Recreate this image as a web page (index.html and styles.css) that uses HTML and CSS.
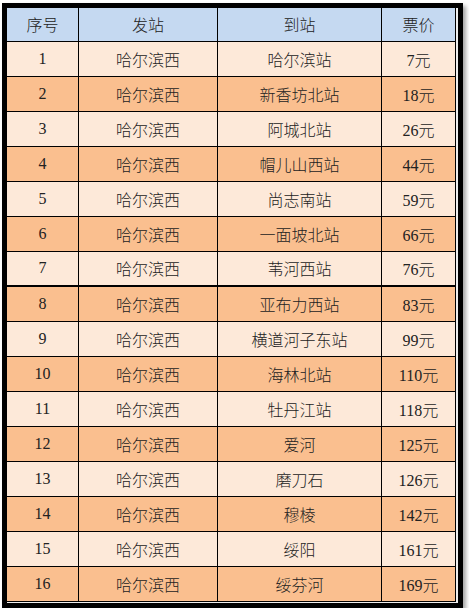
FILE: index.html
```html
<!DOCTYPE html>
<html lang="zh-CN">
<head>
<meta charset="utf-8">
<title>票价表</title>
<link rel="stylesheet" href="styles.css">
</head>
<body>
<div class="frame">
  <div class="sheet">
    <div class="row head"><div class="c">序号</div><div class="c">发站</div><div class="c">到站</div><div class="c">票价</div></div>
    <div class="row lt"><div class="c">1</div><div class="c">哈尔滨西</div><div class="c">哈尔滨站</div><div class="c">7元</div></div>
    <div class="row dk"><div class="c">2</div><div class="c">哈尔滨西</div><div class="c">新香坊北站</div><div class="c">18元</div></div>
    <div class="row lt"><div class="c">3</div><div class="c">哈尔滨西</div><div class="c">阿城北站</div><div class="c">26元</div></div>
    <div class="row dk"><div class="c">4</div><div class="c">哈尔滨西</div><div class="c">帽儿山西站</div><div class="c">44元</div></div>
    <div class="row lt"><div class="c">5</div><div class="c">哈尔滨西</div><div class="c">尚志南站</div><div class="c">59元</div></div>
    <div class="row dk"><div class="c">6</div><div class="c">哈尔滨西</div><div class="c">一面坡北站</div><div class="c">66元</div></div>
    <div class="row lt thick"><div class="c">7</div><div class="c">哈尔滨西</div><div class="c">苇河西站</div><div class="c">76元</div></div>
    <div class="row dk"><div class="c">8</div><div class="c">哈尔滨西</div><div class="c">亚布力西站</div><div class="c">83元</div></div>
    <div class="row lt"><div class="c">9</div><div class="c">哈尔滨西</div><div class="c">横道河子东站</div><div class="c">99元</div></div>
    <div class="row dk"><div class="c">10</div><div class="c">哈尔滨西</div><div class="c">海林北站</div><div class="c">110元</div></div>
    <div class="row lt"><div class="c">11</div><div class="c">哈尔滨西</div><div class="c">牡丹江站</div><div class="c">118元</div></div>
    <div class="row dk"><div class="c">12</div><div class="c">哈尔滨西</div><div class="c">爱河</div><div class="c">125元</div></div>
    <div class="row lt"><div class="c">13</div><div class="c">哈尔滨西</div><div class="c">磨刀石</div><div class="c">126元</div></div>
    <div class="row dk"><div class="c">14</div><div class="c">哈尔滨西</div><div class="c">穆棱</div><div class="c">142元</div></div>
    <div class="row lt"><div class="c">15</div><div class="c">哈尔滨西</div><div class="c">绥阳</div><div class="c">161元</div></div>
    <div class="row dk"><div class="c">16</div><div class="c">哈尔滨西</div><div class="c">绥芬河</div><div class="c">169元</div></div>
  </div>
</div>
</body>
</html>
```

FILE: styles.css
```css
html, body {
  margin: 0;
  padding: 0;
  background: #ffffff;
}

body {
  padding: 3px 0 0 2px;
  font-family: "Liberation Serif", "Noto Sans CJK SC", serif;
  font-size: 16px;
  font-weight: 300;
  color: #222222;
}

.frame {
  box-sizing: content-box;
  width: 449px;
  border: 5px solid #000000;
  background: #eeeeee;
  padding: 0 2px 1px 0;
  box-shadow: 3px 3px 4px rgba(0, 0, 0, 0.35);
}

.sheet {
  display: flex;
  flex-direction: column;
}

.row {
  display: grid;
  grid-template-columns: 72px 139px 164px 74px;
  height: 35px;
}

.row.head {
  height: 34px;
  background: #c5d9f1;
}

.row.lt {
  background: #fde9d9;
}

.row.dk {
  background: #fabf8f;
}

.c {
  box-sizing: border-box;
  border-right: 1px solid #000000;
  border-bottom: 1px solid #000000;
  display: flex;
  align-items: center;
  justify-content: center;
  padding-bottom: 1px;
  white-space: nowrap;
}

.row.thick .c {
  border-bottom-width: 2px;
}
```
